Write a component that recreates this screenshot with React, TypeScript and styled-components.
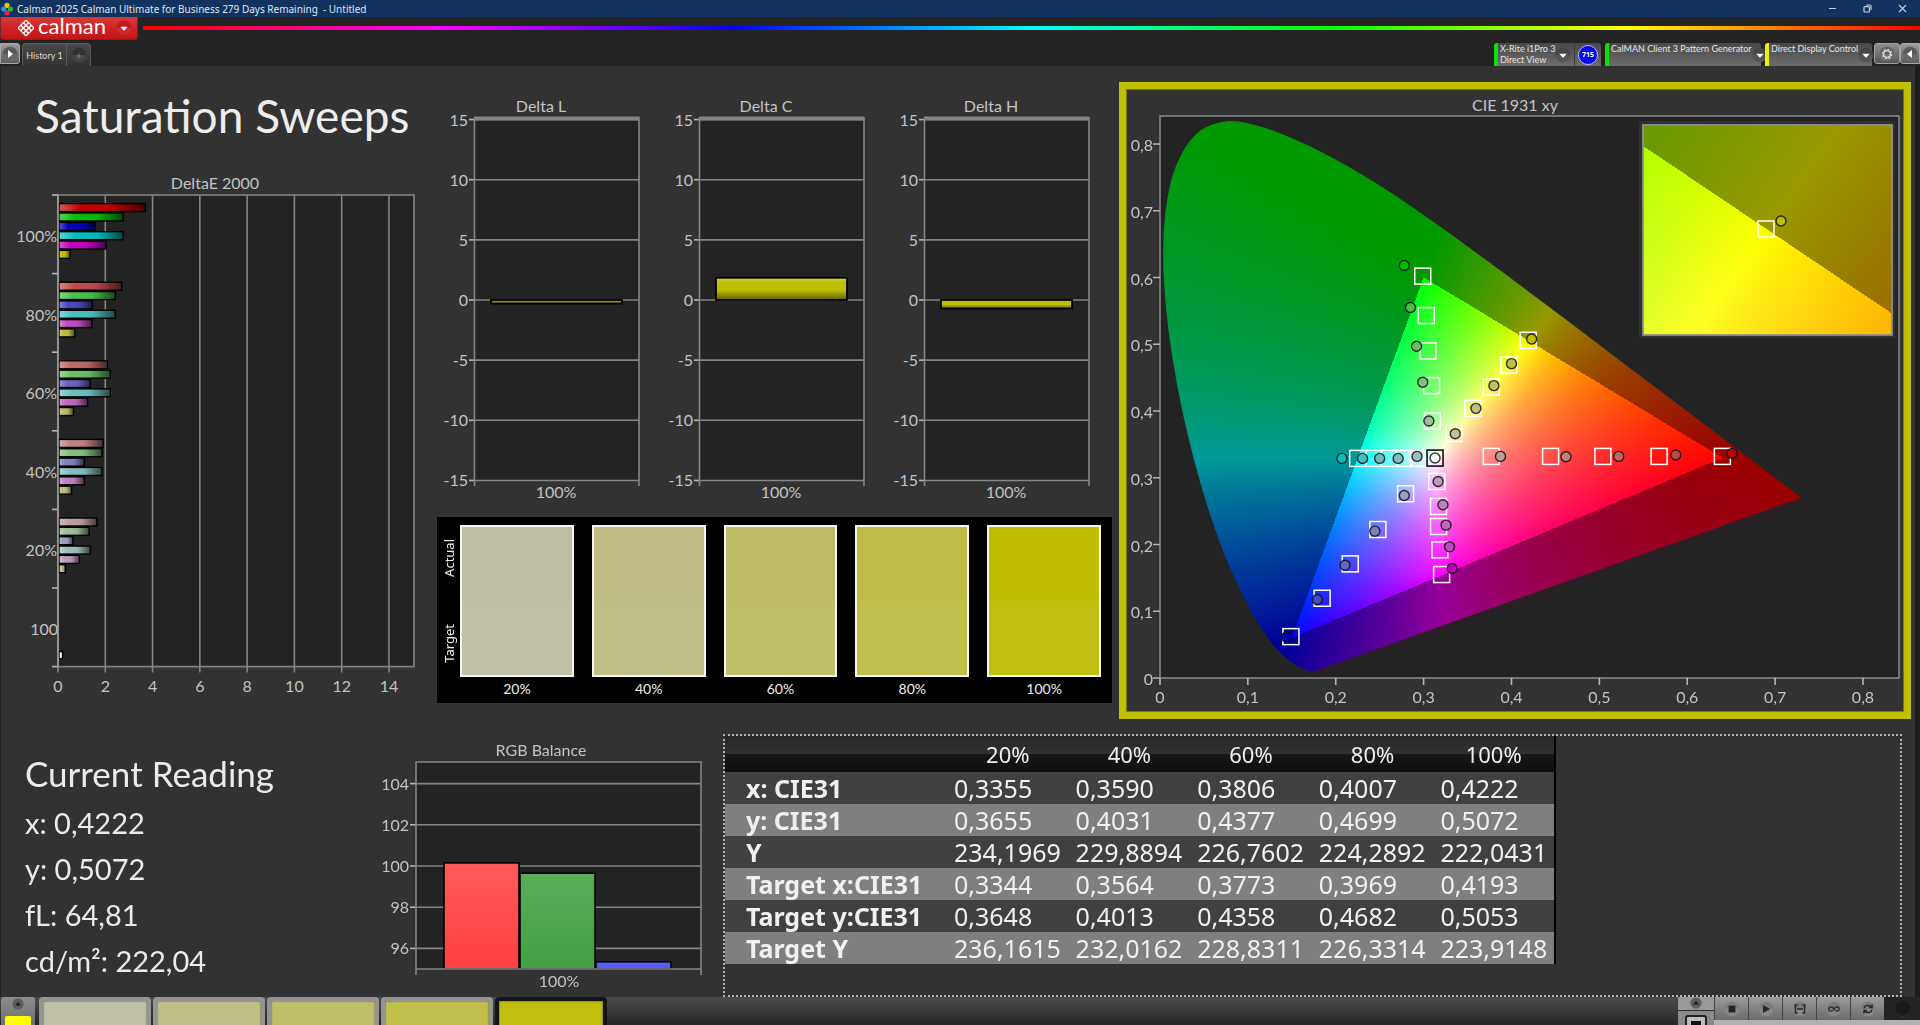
import React, { useEffect, useRef } from "react";
import styled, { createGlobalStyle, css } from "styled-components";

const UI = `Lato, "Noto Sans", sans-serif`;
const WIDE = `"Noto Sans", "Open Sans", sans-serif`;

const GlobalStyle = createGlobalStyle`
  *, *::before, *::after { box-sizing: border-box; }
  body { margin: 0; background: #323232; font-family: ${UI}; }
  button { font-family: inherit; padding: 0; border: 0; cursor: pointer; }
`;

const Shell = styled.div`
  min-height: 100vh;
  display: flex;
  flex-direction: column;
  background: #323232;
  overflow: hidden;
`;

/* ---------- window chrome ---------- */

const TitleBar = styled.header`
  height: 17px;
  display: flex;
  align-items: center;
  gap: 4px;
  padding-left: 1px;
  background: #12335f;
  color: #dfe6ef;
  font: 10px/16px ${WIDE};
  white-space: pre;
`;

const WindowButtons = styled.div`
  margin-left: auto;
  display: flex;
`;

const WindowButton = styled.button`
  width: 35px;
  height: 17px;
  display: grid;
  place-items: center;
  background: none;
  color: #c5cedb;
`;

const Header = styled.div`
  background: #232323;
`;

const BrandRow = styled.div`
  display: flex;
  align-items: flex-start;
  gap: 5px;
  height: 26px;
`;

const Brand = styled.button`
  width: 138px;
  height: 23px;
  flex: none;
  display: flex;
  align-items: center;
  gap: 3px;
  padding: 0 5px 0 16px;
  background: linear-gradient(#d8393b, #d02325 50%, #c41416);
  border: solid #6b2b2c;
  border-width: 0 1px 1px;
  border-radius: 0 0 3px 3px;
  color: #fff;
  font: 400 22px/20px ${UI};
  & > :last-child { margin-left: auto; }
`;

const BrandName = styled.span`
  padding-bottom: 4px;
`;

const Rainbow = styled.div`
  flex: 1;
  height: 4px;
  margin-top: 9px;
  background: linear-gradient(90deg, #f00, #f0f, #00f, #0ff, #0f0, #ff0, #f00);
`;

const TabRow = styled.div`
  height: 23px;
  display: flex;
  gap: 2px;
`;

const ArrowTab = styled.button<{ $side: "left" | "right" }>`
  width: 20px;
  height: 21px;
  display: grid;
  place-items: center;
  background: linear-gradient(#9a9a9a, #5d5d5d);
  border: 1px solid #a8a8a8;
  border-radius: ${(p) => (p.$side === "left" ? "0 3px 3px 0" : "3px 0 0 3px")};
`;

const HistoryTabs = styled.div`
  display: flex;
  background: linear-gradient(#4a4a4a, #333);
  border: solid #5c5c5c;
  border-width: 1px 1px 0;
  border-radius: 4px 4px 0 0;
`;

const HistoryTab = styled.button`
  width: 43px;
  background: none;
  color: #dcdcdc;
  font-size: 9px;
`;

const AddTab = styled.button`
  width: 24px;
  display: grid;
  place-items: center;
  background: none;
  border-left: 1px solid #5c5c5c;
`;

const Devices = styled.div`
  margin-left: auto;
  display: flex;
  gap: 4px;
`;

const Device = styled.div<{ $flag: string }>`
  display: flex;
  border-left: 4px solid ${(p) => p.$flag};
  border-radius: 3px 3px 0 0;
  background: linear-gradient(#484848, #6c6c6c);
`;

const DeviceMenu = styled.button<{ $width: number }>`
  width: ${(p) => p.$width}px;
  display: flex;
  justify-content: space-between;
  padding: 0 4px 0 2px;
  background: none;
  color: #e6e6e6;
  text-align: left;
  font: 400 9px/11px ${UI};
  white-space: pre;
  & > svg { flex: none; margin-top: 4px; }
`;

const MeterBadge = styled.div`
  width: 27px;
  display: grid;
  place-items: center;
  border-left: 1px solid #3c3c3c;
  & > span {
    width: 20px;
    height: 20px;
    border: 1px solid #b9b9ff;
    border-radius: 50%;
    background: #0202f5;
    color: #fff;
    font: 700 7px/18px ${WIDE};
    text-align: center;
  }
`;

const IconPair = styled.div`
  display: flex;
  margin-left: -2px;
`;

const GearTab = styled.button`
  width: 26px;
  height: 21px;
  display: grid;
  place-items: center;
  background: linear-gradient(#8e8e8e, #565656);
  border: 1px solid #a0a0a0;
  border-radius: 3px;
`;

/* ---------- workspace ---------- */

const Workspace = styled.main`
  flex: 1;
  border-left: 1px solid #232323;
  border-right: 5px solid #1c1c1c;
`;

const Upper = styled.section`
  display: grid;
  grid-template-columns: 436fr 675fr 803fr;
  align-items: start;
`;

const Lower = styled.section`
  display: grid;
  grid-template-columns: 374fr 348fr 1179fr;
  align-items: start;
  padding: 15px 13px 0 0;
`;

const PageTitle = styled.h1`
  margin: 0;
  padding: 24px 0 28px 34px;
  color: #ededed;
  font: 400 46px/52px ${UI};
`;

const Figure = styled.svg`
  display: block;
  width: 100%;
  height: auto;
  font-family: ${UI};
  font-size: 16px;
  fill: #c3c3c3;
`;

const DeltaColumn = styled.div`
  padding-top: 24px;
`;

const DeltaRow = styled.div`
  display: grid;
  grid-template-columns: repeat(3, 1fr);
  margin-bottom: 11px;
`;

const SwatchPanel = styled.div`
  display: flex;
  padding: 8px 11px 2px 3px;
  background: #000;
  color: #eee;
`;

const SideLabels = styled.div`
  width: 20px;
  height: 152px;
  flex: none;
  display: flex;
  flex-direction: column;
  justify-content: space-between;
  padding: 14px 0;
`;

const SideLabel = styled.span`
  writing-mode: vertical-rl;
  transform: rotate(180deg);
  font: 13px/18px ${WIDE};
`;

const SwatchRow = styled.div`
  flex: 1;
  display: grid;
  grid-template-columns: repeat(5, 1fr);
  column-gap: 18px;
`;

const SwatchItem = styled.figure`
  margin: 0;
  text-align: center;
  font-size: 14px;
  line-height: 24px;
  min-width: 0;
`;

const Swatch = styled.div<{ $actual: string; $target: string }>`
  height: 152px;
  border: 2px solid #f6f6ee;
  background: linear-gradient(${(p) => p.$actual} 50%, ${(p) => p.$target} 50%);
`;

const CiePanel = styled.div`
  margin: 16px 4px 0 7px;
  border: 8px solid #bfbf00;
  outline: 1px solid #77770a;
  outline-offset: -8px;
`;

const Plot = styled.canvas`
  display: block;
  width: 100%;
  height: 100%;
`;

const Reading = styled.div`
  padding: 19px 0 0 24px;
  color: #ebebeb;
`;

const ReadingTitle = styled.h2`
  margin: 0 0 7px;
  font: 400 35px/40px ${UI};
`;

const ReadingList = styled.ul`
  margin: 0;
  padding: 0;
  list-style: none;
  font-size: 29px;
  line-height: 46px;
`;

const DottedBox = styled.div`
  height: 263px;
  border: 2px dotted #b4b4b4;
`;

const Table = styled.table`
  width: 831px;
  border-collapse: collapse;
  table-layout: fixed;
  border-right: 2px solid #000;
  color: #f0f0f0;
  font: 25px/32px ${WIDE};
`;

const HeadCell = styled.th<{ $width?: number }>`
  width: ${(p) => (p.$width ? `${p.$width}px` : "auto")};
  height: 36px;
  padding: 0;
  font-size: 22px;
  font-weight: 400;
`;

const HeadRow = styled.tr`
  background: linear-gradient(#272727, #303030 50%, #181818 50%, #0e0e0e);
`;

const Row = styled.tr`
  background: #404040;
  &:nth-child(even) { background: #7f7f7f; }
`;

const RowLabel = styled.th`
  padding: 0 0 0 21px;
  text-align: left;
  font-size: 25px;
  font-weight: 700;
`;

const Cell = styled.td`
  height: 32px;
  padding: 0 0 0 7px;
`;

/* ---------- footer ---------- */

const Footer = styled.footer`
  height: 28px;
  display: flex;
  align-items: flex-start;
  overflow: hidden;
  background: linear-gradient(#4b4b4b, #262626);
`;

const ColourMenu = styled.button`
  width: 34px;
  height: 34px;
  margin: 0 4px 0 1px;
  padding: 1px 4px 0;
  display: flex;
  flex-direction: column;
  align-items: center;
  gap: 6px;
  background: linear-gradient(#8c8c8c, #6a6a6a);
  border-radius: 3px 3px 0 0;
  & > span { width: 26px; height: 14px; background: #ffff00; border-radius: 2px; }
`;

const PatternTabs = styled.div`
  display: flex;
  gap: 2px;
`;

const PatternTab = styled.button<{ $colour: string; $active?: boolean }>`
  width: 112px;
  height: 60px;
  border-radius: 4px;
  border: 4px solid #949494;
  background: ${(p) => p.$colour};
  box-shadow: inset 0 0 2px #333;
  ${(p) => p.$active && css`border-color: #141414;`}
`;

const Transport = styled.div`
  margin-left: auto;
  display: flex;
`;

const PatternMenu = styled.button`
  width: 36px;
  height: 40px;
  display: flex;
  flex-direction: column;
  align-items: center;
  gap: 2px;
  background: linear-gradient(#999 13px, #2c2c2c 13px 14px, #8a8a8a 14px);
`;

const TransportKeys = styled.div`
  display: grid;
  grid-template-columns: repeat(5, 34px);
  grid-template-rows: 23px 10px;
`;

const Key = styled.button`
  display: grid;
  place-items: center;
  background: linear-gradient(#9c9c9c, #6a6a6a);
  border-left: 1px solid #454545;
`;

const Strip = styled.div`
  grid-column: 1 / -1;
  background: #b0b0b0;
`;

const KnobColumn = styled.div`
  width: 36px;
  height: 33px;
  background: linear-gradient(#232323 23px, #b0b0b0 23px);
`;

const Knob = styled.div`
  height: 23px;
  display: grid;
  place-items: center;
  & > span { width: 15px; height: 15px; border-radius: 50%; background: #191919; box-shadow: 0 1px 1px #333; }
`;

/* ---------- icons ---------- */

const AppIcon = () => (
  <svg width="12" height="14" viewBox="0 0 12 14" aria-hidden="true">
    <path d="M6 1 12 7 6 13 0 7z" fill="#1c2430" />
    <circle cx="6" cy="3.4" r="2.6" fill="#e8c613" />
    <circle cx="2.8" cy="7" r="2.6" fill="#1f9be0" />
    <circle cx="9.4" cy="7" r="2.6" fill="#35b52e" />
    <circle cx="6" cy="10.8" r="2.6" fill="#e0245e" />
  </svg>
);

const BrandMark = () => (
  <svg width="18" height="18" viewBox="-9 -9 18 18" aria-hidden="true">
    <g transform="rotate(45)">
      <rect x="-6.2" y="-6.2" width="12.4" height="12.4" rx="1.6" fill="#fff" />
      {[-3.8, 0, 3.8].map((x) =>
        [-3.8, 0, 3.8].map((y) => <circle key={`${x}${y}`} cx={x} cy={y} r="1.35" fill="#d22d2f" />)
      )}
    </g>
  </svg>
);

const Round = ({ base, children }: { base: string; children: React.ReactNode }) => (
  <svg width="16" height="16" viewBox="-8 -8 16 16" aria-hidden="true">
    <circle r="7.3" fill={base} />
    <path d="M-7.3 0a7.3 7.3 0 0 0 14.6 0" fill="#fff" opacity="0.09" />
    {children}
  </svg>
);

const Caret = ({ base = "#454545" }: { base?: string }) => (
  <Round base={base}><path d="M-3.8-1.2H3.8L0 2.8z" fill="#fff" /></Round>
);

const UpDisc = () => (
  <svg width="12" height="12" viewBox="-6 -6 12 12" aria-hidden="true">
    <circle r="5.6" fill="#5e5e5e" />
    <path d="M-3 1.4H3L0-2z" fill="#1d1d1d" />
  </svg>
);

/* ---------- charts ---------- */

const AXIS = "#858585";
const LEVELS = [0, 72, 102, 128, 156];
const tint = (mask: string, low: number) =>
  `rgb(${mask.split("").map((c) => (c === "1" ? 191 : low)).join(",")})`;

const HUES = ["100", "010", "001", "011", "101", "110"];
const DELTA_E = [
  { label: "100%", values: [3.72, 2.78, 1.6, 2.78, 2.06, 0.54] },
  { label: "80%", values: [2.72, 2.45, 1.48, 2.45, 1.46, 0.74] },
  { label: "60%", values: [2.12, 2.24, 1.39, 2.24, 1.28, 0.68] },
  { label: "40%", values: [1.93, 1.88, 1.14, 1.88, 1.14, 0.6] },
  { label: "20%", values: [1.67, 1.34, 0.66, 1.39, 0.93, 0.34] },
];

const DeltaEChart = () => {
  const left = 57, top = 25, unit = 23.64, group = 78.6;
  const bottom = top + group * 6;
  return (
    <Figure viewBox="0 0 436 530" role="img" aria-label="DeltaE 2000">
      <defs>
        <linearGradient id="sheen">
          <stop offset="0" stopColor="#fff" stopOpacity="0.35" />
          <stop offset="0.25" stopColor="#fff" stopOpacity="0" />
          <stop offset="0.6" stopColor="#000" stopOpacity="0.05" />
          <stop offset="1" stopColor="#000" stopOpacity="0.62" />
        </linearGradient>
      </defs>
      <text x="214" y="19" textAnchor="middle">DeltaE 2000</text>
      <rect x={left} y={top} width="356" height={group * 6} fill="#232323" stroke={AXIS} strokeWidth="1.6" />
      {[0, 2, 4, 6, 8, 10, 12, 14].map((v) => (
        <g key={v}>
          <path d={`M${left + v * unit} ${top}V${bottom + 6}`} stroke={AXIS} strokeWidth="1.6" />
          <text x={left + v * unit} y={bottom + 25} textAnchor="middle">{v}</text>
        </g>
      ))}
      {[0, 1, 2, 3, 4, 5, 6].map((i) => (
        <path key={i} d={`M${left - 6} ${top + i * group}h6`} stroke="#b5b5b5" strokeWidth="1.6" />
      ))}
      {DELTA_E.map((row, g) => (
        <g key={row.label}>
          <text x={left - 1} y={top + g * group + 47} textAnchor="end">{row.label}</text>
          {row.values.map((v, i) => {
            const box = { x: left + 1, y: top + g * group + 8.6 + i * 9.35, width: v * unit - 1.6, height: 8 };
            return (
              <g key={i}>
                <rect {...box} fill={tint(HUES[i], LEVELS[g])} />
                <rect {...box} fill="url(#sheen)" stroke="#000" strokeWidth="1.4" />
              </g>
            );
          })}
        </g>
      ))}
      <text x={left} y={top + 5 * group + 47} textAnchor="end">100</text>
      <rect x={left + 1} y={bottom - 15} width="3.6" height="7" fill="#f4f4f4" stroke="#000" strokeWidth="1.4" />
      <path d={`M${left} ${top}V${bottom}`} stroke="#9a9a9a" strokeWidth="1.6" />
    </Figure>
  );
};

const DeltaChart = ({ name, value, fill }: { name: string; value: number; fill: string }) => {
  const zero = 210, unit = 12.03;
  const top = value > 0 ? zero - value * unit : zero;
  return (
    <Figure viewBox="0 0 225 416" role="img" aria-label={name}>
      <defs>
        <linearGradient id="barSheen" x2="0" y2="1">
          <stop offset="0" stopColor="#fff" stopOpacity="0.3" />
          <stop offset="0.2" stopColor="#fff" stopOpacity="0" />
          <stop offset="0.55" stopColor="#000" stopOpacity="0" />
          <stop offset="1" stopColor="#000" stopOpacity="0.5" />
        </linearGradient>
      </defs>
      <text x="104" y="22" textAnchor="middle">{name}</text>
      <rect x="38" y="28" width="164" height="362" fill="#232323" />
      <path d="M37 28.5H202" stroke={AXIS} strokeWidth="4" />
      {[15, 10, 5, 0, -5, -10, -15].map((v) => {
        const y = zero - v * unit;
        return (
          <g key={v}>
            <path d={`M38 ${y}H202`} stroke={AXIS} strokeWidth="1.6" />
            <path d={`M32 ${y}h6`} stroke="#b5b5b5" strokeWidth="1.6" />
            <text x="31" y={y + 6} textAnchor="end">{v}</text>
          </g>
        );
      })}
      <path d="M37.5 27V396M202 27V396" stroke={AXIS} strokeWidth="1.6" />
      <rect x="54" y={top} width="131" height={Math.abs(value) * unit} fill={fill} />
      <rect x="54" y={top} width="131" height={Math.abs(value) * unit} fill="url(#barSheen)" stroke="#000" strokeWidth="1.8" />
      <text x="119" y="408" textAnchor="middle">100%</text>
    </Figure>
  );
};

const RgbChart = () => {
  const y = (v: number) => 235 - (v - 95) * 20.6;
  const bars = [
    { v: 100.15, x: 69, from: "#ff5a5a", to: "#ff4040" },
    { v: 99.65, x: 145, from: "#5aad5a", to: "#42a042" },
    { v: 95.35, x: 221, from: "#5e5eff", to: "#5555ff" },
  ];
  return (
    <Figure viewBox="0 0 348 260" role="img" aria-label="RGB Balance">
      <defs>
        {bars.map((b, i) => (
          <linearGradient key={i} id={`rgb${i}`} x2="0" y2="1">
            <stop offset="0" stopColor={b.from} />
            <stop offset="1" stopColor={b.to} />
          </linearGradient>
        ))}
      </defs>
      <text x="166" y="22" textAnchor="middle">RGB Balance</text>
      <rect x="41" y="28" width="285" height="207" fill="#232323" />
      {[104, 102, 100, 98, 96].map((v) => (
        <g key={v}>
          <path d={`M41 ${y(v)}H326`} stroke={AXIS} strokeWidth="1.6" />
          <path d={`M35 ${y(v)}h6`} stroke="#b5b5b5" strokeWidth="1.6" />
          <text x="34" y={y(v) + 6} textAnchor="end">{v}</text>
        </g>
      ))}
      {bars.map((b, i) => (
        <rect key={i} x={b.x} y={y(b.v)} width="75" height={235 - y(b.v)} fill={`url(#rgb${i})`} stroke="#000" strokeWidth="1.6" />
      ))}
      <path d="M41 241V28H326V241M41 235H326" fill="none" stroke={AXIS} strokeWidth="1.6" />
      <text x="184" y="253" textAnchor="middle">100%</text>
    </Figure>
  );
};

/* ---------- CIE 1931 diagram ---------- */

const LOCUS: [number, number][] = [
  [0.1725, 0.0085], [0.169, 0.0105], [0.1644, 0.0135], [0.1566, 0.0177], [0.151, 0.0227], [0.144, 0.0297],
  [0.1355, 0.0399], [0.1241, 0.0578], [0.1096, 0.0868], [0.0913, 0.1327], [0.0687, 0.2007],
  [0.0454, 0.295], [0.0235, 0.4127], [0.0082, 0.5384], [0.0039, 0.6548], [0.0139, 0.7502],
  [0.0389, 0.812], [0.0743, 0.8338], [0.1142, 0.8262], [0.1547, 0.8059], [0.1929, 0.7816],
  [0.2296, 0.7543], [0.2658, 0.7243], [0.3016, 0.6923], [0.3373, 0.6589], [0.3731, 0.6245],
  [0.4087, 0.5896], [0.4441, 0.5547], [0.4788, 0.5202], [0.5125, 0.4866], [0.5448, 0.4544],
  [0.5752, 0.4242], [0.6029, 0.3965], [0.627, 0.3725], [0.6482, 0.3514], [0.6658, 0.334],
  [0.6801, 0.3197], [0.6915, 0.3083], [0.7079, 0.292], [0.73, 0.27],
];

const DOMAIN = { x0: 0, x1: 0.841, y0: 0, y1: 0.842 };
const INSET = { x0: 0.3891, x1: 0.4501, y0: 0.4748, y1: 0.5355 };

const shade = (x: number, y: number): [number, number, number] => {
  const Y = Math.max(y, 0.0001);
  const X = x / Y;
  const Z = (1 - x - Y) / Y;
  const rgb = [
    3.2406 * X - 1.5372 - 0.4986 * Z,
    -0.9689 * X + 1.8758 + 0.0415 * Z,
    0.0557 * X - 0.204 + 1.057 * Z,
  ];
  const gain = Math.min(...rgb) < -0.0005 ? 0.6 : 1;
  const max = Math.max(...rgb);
  return rgb.map((c) => 255 * gain * Math.pow(Math.max(c, 0) / max, 0.85)) as [number, number, number];
};

type Domain = typeof DOMAIN;

const smooth = (ctx: CanvasRenderingContext2D, pts: number[][]) => {
  ctx.beginPath();
  ctx.moveTo(pts[0][0], pts[0][1]);
  for (let i = 0; i < pts.length - 1; i++) {
    const p0 = pts[Math.max(i - 1, 0)], p1 = pts[i], p2 = pts[i + 1], p3 = pts[Math.min(i + 2, pts.length - 1)];
    ctx.bezierCurveTo(
      p1[0] + (p2[0] - p0[0]) / 6, p1[1] + (p2[1] - p0[1]) / 6,
      p2[0] - (p3[0] - p1[0]) / 6, p2[1] - (p3[1] - p1[1]) / 6, p2[0], p2[1]
    );
  }
  ctx.closePath();
};

const Chromaticity = ({ domain, width, height, clipped }: { domain: Domain; width: number; height: number; clipped?: boolean }) => {
  const ref = useRef<HTMLCanvasElement>(null);
  useEffect(() => {
    const ctx = ref.current!.getContext("2d")!;
    const { x0, x1, y0, y1 } = domain;
    const image = ctx.createImageData(width, height);
    for (let j = 0; j < height; j++) {
      for (let i = 0; i < width; i++) {
        const c = shade(x0 + ((i + 0.5) / width) * (x1 - x0), y1 - ((j + 0.5) / height) * (y1 - y0));
        image.data.set([c[0], c[1], c[2], 255], (j * width + i) * 4);
      }
    }
    ctx.putImageData(image, 0, 0);
    if (clipped) {
      ctx.globalCompositeOperation = "destination-in";
      smooth(ctx, LOCUS.map(([x, y]) => [((x - x0) / (x1 - x0)) * width, ((y1 - y) / (y1 - y0)) * height]));
      ctx.fill();
      ctx.globalCompositeOperation = "source-over";
    }
  }, [domain, width, height, clipped]);
  return <Plot ref={ref} width={width} height={height} />;
};

type Sweep = { mask: string; targets: [number, number][]; actual: [number, number][] };

/* Every sweep runs from 100% down to 20% saturation. */
const SWEEPS: Sweep[] = [
  { mask: "100", targets: [[0.64, 0.332], [0.568, 0.332], [0.504, 0.332], [0.4445, 0.332], [0.377, 0.332]],
    actual: [[0.651, 0.3365], [0.587, 0.334], [0.522, 0.332], [0.462, 0.3315], [0.3875, 0.332]] },
  { mask: "010", targets: [[0.299, 0.602], [0.303, 0.543], [0.305, 0.49], [0.309, 0.438], [0.31, 0.385]],
    actual: [[0.278, 0.618], [0.285, 0.555], [0.292, 0.497], [0.299, 0.443], [0.306, 0.385]] },
  { mask: "001", targets: [[0.149, 0.062], [0.1845, 0.1195], [0.2165, 0.171], [0.248, 0.2225], [0.2795, 0.276]],
    actual: [[0.144, 0.0615], [0.179, 0.1175], [0.2105, 0.169], [0.2445, 0.22], [0.278, 0.2735]] },
  { mask: "011", targets: [[0.225, 0.329], [0.243, 0.329], [0.2605, 0.329], [0.278, 0.329], [0.294, 0.329]],
    actual: [[0.207, 0.329], [0.2305, 0.329], [0.25, 0.329], [0.271, 0.329], [0.2925, 0.332]] },
  { mask: "101", targets: [[0.3205, 0.155], [0.3185, 0.192], [0.317, 0.227], [0.317, 0.257], [0.315, 0.2945]],
    actual: [[0.3325, 0.164], [0.3295, 0.1965], [0.3255, 0.229], [0.322, 0.2595], [0.3165, 0.2945]] },
  { mask: "110", targets: [[0.419, 0.506], [0.397, 0.469], [0.377, 0.436], [0.356, 0.404], [0.3345, 0.3665]],
    actual: [[0.423, 0.508], [0.4, 0.471], [0.38, 0.438], [0.3595, 0.404], [0.336, 0.366]] },
];

const Target = ({ x, y, stroke = "#fff" }: { x: number; y: number; stroke?: string }) => (
  <rect x={x - 8} y={y - 8} width="16" height="16" fill="none" stroke={stroke} strokeWidth="1.5" />
);

const Dot = ({ x, y, fill }: { x: number; y: number; fill: string }) => (
  <circle cx={x} cy={y} r="5" fill={fill} stroke="#101010" strokeOpacity="0.85" strokeWidth="1.4" />
);

const CieChart = () => {
  const w = 739, h = 562, left = 33, top = 26;
  const px = (x: number) => left + (x / DOMAIN.x1) * w;
  const py = (y: number) => top + (1 - y / DOMAIN.y1) * h;
  const ticks = [0, 1, 2, 3, 4, 5, 6, 7, 8];
  const name = (n: number) => (n === 0 ? "0" : `0,${n}`);
  return (
    <Figure viewBox="0 0 776 621" role="img" aria-label="CIE 1931 xy">
      <text x="388" y="21" textAnchor="middle">CIE 1931 xy</text>
      <rect x={left} y={top} width={w} height={h} fill="#232323" />
      <foreignObject x={left} y={top} width={w} height={h}>
        <Chromaticity domain={DOMAIN} width={w} height={h} clipped />
      </foreignObject>
      <path d={`M${px(0.1745)} ${py(0.0045)}L${px(0.735)} ${py(0.2665)}`} stroke="#42102c" strokeWidth="1" />
      <rect x={left} y={top} width={w} height={h} fill="none" stroke={AXIS} strokeWidth="1.6" />
      {ticks.map((n) => (
        <g key={n}>
          <path d={`M${px(n / 10)} ${top + h}v7M${left} ${py(n / 10)}h-7`} stroke="#b5b5b5" strokeWidth="1.6" />
          <text x={px(n / 10)} y={top + h + 25} textAnchor="middle">{name(n)}</text>
          <text x={left - 7} y={py(n / 10) + 7} textAnchor="end">{name(n)}</text>
        </g>
      ))}
      {SWEEPS.map((s) => s.targets.map(([x, y], i) => <Target key={s.mask + i} x={px(x)} y={py(y)} />))}
      <Target x={px(0.313)} y={py(0.3295)} stroke="#000" />
      {SWEEPS.map((s) => s.actual.map(([x, y], i) => (
        <Dot key={s.mask + i} x={px(x)} y={py(y)} fill={tint(s.mask, LEVELS[i])} />
      )))}
      <Dot x={px(0.313)} y={py(0.3295)} fill="#fff" />
      <rect x="512" y="31" width="256" height="217" fill="#303030" />
      <foreignObject x="516" y="35" width="249" height="210">
        <Chromaticity domain={INSET} width={249} height={210} />
      </foreignObject>
      <rect x="516" y="35" width="249" height="210" fill="none" stroke="#8f8f8f" strokeWidth="1.8" />
      <Target x={639} y={139} />
      <Dot x={654} y={131} fill="#bfbf00" />
    </Figure>
  );
};

/* ---------- data ---------- */

const SWATCHES = [
  { label: "20%", actual: "#bfbda3", target: "#bfc0a6" },
  { label: "40%", actual: "#bfbc85", target: "#bfbf88" },
  { label: "60%", actual: "#bfbc67", target: "#bfbf6b" },
  { label: "80%", actual: "#bfbc48", target: "#bfc04c" },
  { label: "100%", actual: "#bfbd00", target: "#bfbf10" },
];

const TABLE = [
  ["x: CIE31", "0,3355", "0,3590", "0,3806", "0,4007", "0,4222"],
  ["y: CIE31", "0,3655", "0,4031", "0,4377", "0,4699", "0,5072"],
  ["Y", "234,1969", "229,8894", "226,7602", "224,2892", "222,0431"],
  ["Target x:CIE31", "0,3344", "0,3564", "0,3773", "0,3969", "0,4193"],
  ["Target y:CIE31", "0,3648", "0,4013", "0,4358", "0,4682", "0,5053"],
  ["Target Y", "236,1615", "232,0162", "228,8311", "226,3314", "223,9148"],
];

const READINGS = ["x: 0,4222", "y: 0,5072", "fL: 64,81", "cd/m²: 222,04"];

const KEYS = [
  { label: "Stop", icon: <path d="M-3.4-3.4h6.8v6.8h-6.8z" fill="#262626" /> },
  { label: "Play", icon: <path d="M-3-4 4 0-3 4z" fill="#262626" /> },
  { label: "Read series", icon: <path d="M-2.4-4H-4.6V4H-2.4M2.4-4H4.6V4H2.4M-3 0H3" fill="none" stroke="#262626" strokeWidth="1.5" /> },
  { label: "Continuous", icon: <path d="M0 0C-1.4-2-2.3-2.2-3-2.2A2.1 2.1 0 0 0-3 2.2C-2.3 2.2-1.4 2 0 0 1.4-2 2.3-2.2 3-2.2A2.1 2.1 0 0 1 3 2.2C2.3 2.2 1.4 2 0 0" fill="none" stroke="#262626" strokeWidth="1.2" /> },
  { label: "Refresh", icon: <path d="M-4-.6C-3.6-3.6.6-4.6 2.8-2.4M4-4.4V-1.4H1M4 .6C3.6 3.6-.6 4.6-2.8 2.4M-4 4.4V1.4H-1" fill="none" stroke="#262626" strokeWidth="1.5" /> },
];

export default function App() {
  return (
    <Shell>
      <GlobalStyle />
      <TitleBar>
        <AppIcon />
        <span>{"Calman 2025 Calman Ultimate for Business 279 Days Remaining  - Untitled"}</span>
        <WindowButtons>
          <WindowButton aria-label="Minimize">
            <svg width="9" height="9" viewBox="0 0 9 9"><path d="M1 4.5h7" stroke="currentColor" /></svg>
          </WindowButton>
          <WindowButton aria-label="Restore">
            <svg width="9" height="9" viewBox="0 0 9 9" fill="none" stroke="currentColor" strokeWidth="1.2">
              <rect x="1" y="2.6" width="5.4" height="5.4" rx="1" /><path d="M3 1h4a1 1 0 0 1 1 1v4" />
            </svg>
          </WindowButton>
          <WindowButton aria-label="Close">
            <svg width="9" height="9" viewBox="0 0 9 9"><path d="M1 1l7 7M8 1 1 8" stroke="currentColor" strokeWidth="1.1" /></svg>
          </WindowButton>
        </WindowButtons>
      </TitleBar>

      <Header>
        <BrandRow>
          <Brand aria-label="calman menu">
            <BrandMark />
            <BrandName>calman</BrandName>
            <Caret base="#c5161c" />
          </Brand>
          <Rainbow />
        </BrandRow>
        <TabRow>
          <ArrowTab $side="left" aria-label="Show sidebar">
            <Round base="#5a5a5a"><path d="M-2-4 3 0-2 4z" fill="#fff" /></Round>
          </ArrowTab>
          <HistoryTabs>
            <HistoryTab>History 1</HistoryTab>
            <AddTab aria-label="Add history">
              <Round base="#323232"><path d="M-2.5 1h5M0-1.5v5" stroke="#777" /></Round>
            </AddTab>
          </HistoryTabs>
          <Devices>
            <Device $flag="#0be00b">
              <DeviceMenu $width={76}>{"X-Rite i1Pro 3\nDirect View"}<Caret /></DeviceMenu>
              <MeterBadge><span>715</span></MeterBadge>
            </Device>
            <Device $flag="#0be00b">
              <DeviceMenu $width={152}>CalMAN Client 3 Pattern Generator<Caret /></DeviceMenu>
            </Device>
            <Device $flag="#f0f000">
              <DeviceMenu $width={103}>Direct Display Control<Caret /></DeviceMenu>
            </Device>
            <IconPair>
              <GearTab aria-label="Settings">
                <Round base="#626262">
                  <circle r="3.4" fill="none" stroke="#ddd" strokeWidth="1.3" />
                  <circle r="4.6" fill="none" stroke="#ddd" strokeWidth="1.4" strokeDasharray="1.8 1.81" />
                </Round>
              </GearTab>
              <ArrowTab $side="right" aria-label="Show panel">
                <Round base="#5a5a5a"><path d="M2-4-3 0 2 4z" fill="#fff" /></Round>
              </ArrowTab>
            </IconPair>
          </Devices>
        </TabRow>
      </Header>

      <Workspace>
        <Upper>
          <div>
            <PageTitle>Saturation Sweeps</PageTitle>
            <DeltaEChart />
          </div>
          <DeltaColumn>
            <DeltaRow>
              <DeltaChart name="Delta L" value={-0.3} fill="#8f8a1a" />
              <DeltaChart name="Delta C" value={1.85} fill="#bfbf00" />
              <DeltaChart name="Delta H" value={-0.7} fill="#bfbf00" />
            </DeltaRow>
            <SwatchPanel>
              <SideLabels>
                <SideLabel>Actual</SideLabel>
                <SideLabel>Target</SideLabel>
              </SideLabels>
              <SwatchRow>
                {SWATCHES.map((s) => (
                  <SwatchItem key={s.label}>
                    <Swatch $actual={s.actual} $target={s.target} />
                    <figcaption>{s.label}</figcaption>
                  </SwatchItem>
                ))}
              </SwatchRow>
            </SwatchPanel>
          </DeltaColumn>
          <CiePanel><CieChart /></CiePanel>
        </Upper>

        <Lower>
          <Reading>
            <ReadingTitle>Current Reading</ReadingTitle>
            <ReadingList>{READINGS.map((r) => <li key={r}>{r}</li>)}</ReadingList>
          </Reading>
          <RgbChart />
          <DottedBox>
            <Table>
              <thead>
                <HeadRow>
                  <HeadCell $width={222} aria-label="Value" />
                  {SWATCHES.map((s) => <HeadCell key={s.label} scope="col">{s.label}</HeadCell>)}
                </HeadRow>
              </thead>
              <tbody>
                {TABLE.map(([label, ...cells]) => (
                  <Row key={label}>
                    <RowLabel scope="row">{label}</RowLabel>
                    {cells.map((c) => <Cell key={c}>{c}</Cell>)}
                  </Row>
                ))}
              </tbody>
            </Table>
          </DottedBox>
        </Lower>
      </Workspace>

      <Footer>
        <ColourMenu aria-label="Colour sets"><UpDisc /><span /></ColourMenu>
        <PatternTabs>
          {SWATCHES.map((s, i) => (
            <PatternTab key={s.label} aria-label={s.label} $colour={s.target} $active={i === 4} />
          ))}
        </PatternTabs>
        <Transport>
          <PatternMenu aria-label="Pattern window">
            <UpDisc />
            <svg width="24" height="20" viewBox="0 0 24 20" aria-hidden="true">
              <rect x="2" y="5" width="20" height="16" rx="2" fill="#bdbdbd" stroke="#222" strokeWidth="2" />
              <rect x="7" y="10" width="10" height="10" fill="#111" />
            </svg>
          </PatternMenu>
          <TransportKeys>
            {KEYS.map((k) => <Key key={k.label} aria-label={k.label}><Round base="#7c7c7c">{k.icon}</Round></Key>)}
            <Strip />
          </TransportKeys>
          <KnobColumn><Knob><span /></Knob></KnobColumn>
        </Transport>
      </Footer>
    </Shell>
  );
}
